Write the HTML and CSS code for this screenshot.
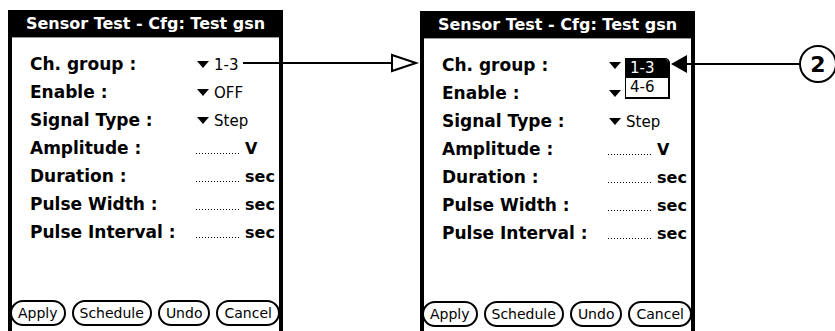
FILE: index.html
```html
<!DOCTYPE html>
<html lang="en">
<head>
    <meta charset="UTF-8">
    <meta name="viewport" content="width=device-width, initial-scale=1.0">
    <title>Sensor Test - Cfg: Test gsn</title>
    <link rel="stylesheet" href="styles.css">
</head>
<body>

<div class="stage">

    <!-- screen 1: form closed -->
    <div class="screen">
        <div class="title">Sensor Test - Cfg: Test gsn</div>
        <div class="form">
            <div class="label">Ch. group :</div>
            <div class="value"><span class="tri"></span><span class="choice">1-3</span></div>
            <div class="label">Enable :</div>
            <div class="value"><span class="tri"></span><span class="choice">OFF</span></div>
            <div class="label">Signal Type :</div>
            <div class="value"><span class="tri"></span><span class="choice">Step</span></div>
            <div class="label">Amplitude :</div>
            <div class="value"><span class="field"></span><span class="unit">V</span></div>
            <div class="label">Duration :</div>
            <div class="value"><span class="field"></span><span class="unit">sec</span></div>
            <div class="label">Pulse Width :</div>
            <div class="value"><span class="field"></span><span class="unit">sec</span></div>
            <div class="label">Pulse Interval :</div>
            <div class="value"><span class="field"></span><span class="unit">sec</span></div>
        </div>
        <div class="buttons">
            <span class="btn">Apply</span>
            <span class="btn">Schedule</span>
            <span class="btn">Undo</span>
            <span class="btn">Cancel</span>
        </div>
    </div>

    <!-- screen 2: channel group list open -->
    <div class="screen screen-open">
        <div class="title">Sensor Test - Cfg: Test gsn</div>
        <div class="form">
            <div class="label">Ch. group :</div>
            <div class="value"><span class="tri"></span></div>
            <div class="label">Enable :</div>
            <div class="value"><span class="tri"></span><span class="choice hidden">OFF</span></div>
            <div class="label">Signal Type :</div>
            <div class="value"><span class="tri"></span><span class="choice">Step</span></div>
            <div class="label">Amplitude :</div>
            <div class="value"><span class="field"></span><span class="unit">V</span></div>
            <div class="label">Duration :</div>
            <div class="value"><span class="field"></span><span class="unit">sec</span></div>
            <div class="label">Pulse Width :</div>
            <div class="value"><span class="field"></span><span class="unit">sec</span></div>
            <div class="label">Pulse Interval :</div>
            <div class="value"><span class="field"></span><span class="unit">sec</span></div>
        </div>
        <div class="buttons">
            <span class="btn">Apply</span>
            <span class="btn">Schedule</span>
            <span class="btn">Undo</span>
            <span class="btn">Cancel</span>
        </div>
        <div class="popup">
            <div class="item sel">1-3</div>
            <div class="item">4-6</div>
        </div>
    </div>

    <!-- callout arrows -->
    <svg class="notes" width="835" height="331" viewBox="0 0 835 331">
        <line x1="243" y1="63" x2="394" y2="63" stroke="#000" stroke-width="2"/>
        <polygon points="392,55 416,63 392,71" fill="#fff" stroke="#000" stroke-width="2"/>
        <polygon points="671,64 687,55 687,73" fill="#000"/>
        <line x1="686" y1="64" x2="801" y2="64" stroke="#000" stroke-width="2"/>
        <circle cx="818" cy="64" r="18" fill="#fff" stroke="#000" stroke-width="2"/>
        <text x="818" y="72" text-anchor="middle" class="num">2</text>
    </svg>

</div>

</body>
</html>
```

FILE: styles.css
```css
body {
    margin: 0;
    background: #fff;
    font-family: "DejaVu Sans", sans-serif;
    color: #000;
    overflow: hidden;
}
.stage {
    position: relative;
    width: 835px;
    height: 331px;
    box-sizing: border-box;
    padding: 10px 0 0 8px;
    display: flex;
    gap: 137px;
    align-items: flex-start;
    overflow: hidden;
}
.screen {
    position: relative;
    width: 275px;
    height: 340px;
    box-sizing: border-box;
    border-left: 4px solid #000;
    border-right: 4px solid #000;
    display: flex;
    flex-direction: column;
}
.screen-open {
    margin-top: 1px;
}
.title {
    height: 27px;
    line-height: 27px;
    background: #000;
    color: #fff;
    font-weight: bold;
    font-size: 16px;
    text-align: center;
    border-bottom: 1px solid #999;
}
.form {
    display: grid;
    grid-template-columns: 167px 1fr;
    grid-auto-rows: 28px;
    align-items: baseline;
    padding: 12px 0 0 18px;
    font-size: 17px;
    line-height: 28px;
}
.label {
    font-weight: bold;
    white-space: nowrap;
}
.value {
    font-size: 15px;
    white-space: nowrap;
}
.tri {
    display: inline-block;
    width: 0;
    height: 0;
    border-left: 6px solid transparent;
    border-right: 6px solid transparent;
    border-top: 7px solid #000;
    vertical-align: 2px;
}
.choice {
    margin-left: 5px;
}
/* value sitting under the open list: only its left edge peeks out */
.choice.hidden {
    display: inline-block;
    width: 2px;
    overflow: hidden;
    vertical-align: bottom;
    margin-left: 6px;
}
.field {
    display: inline-block;
    width: 44px;
    height: 1px;
    margin-left: -1px;
    background-image: linear-gradient(to right, #000 1px, transparent 1px);
    background-size: 3px 1px;
    vertical-align: baseline;
}
.unit {
    font-weight: bold;
    font-size: 16px;
    margin-left: 5px;
}
.buttons {
    display: flex;
    gap: 6px;
    margin-top: 54px;
    margin-left: -2px;
}
.btn {
    height: 26px;
    box-sizing: border-box;
    border: 2px solid #000;
    border-radius: 13px;
    padding: 0 6px;
    background: #fff;
    font-size: 14px;
    line-height: 22px;
    white-space: nowrap;
}
.popup {
    position: absolute;
    left: 201px;
    top: 47px;
    width: 45px;
    box-sizing: border-box;
    background: #fff;
    border: 1px solid #000;
    border-right-width: 2px;
    border-bottom-width: 2px;
    border-top-right-radius: 5px;
    overflow: hidden;
    font-size: 15px;
}
.item {
    height: 19px;
    line-height: 19px;
    padding-left: 4px;
}
.item.sel {
    background: #000;
    color: #fff;
}
.notes {
    position: absolute;
    left: 0;
    top: 0;
    pointer-events: none;
}
.num {
    font-family: "DejaVu Sans", sans-serif;
    font-weight: bold;
    font-size: 22px;
}
```
